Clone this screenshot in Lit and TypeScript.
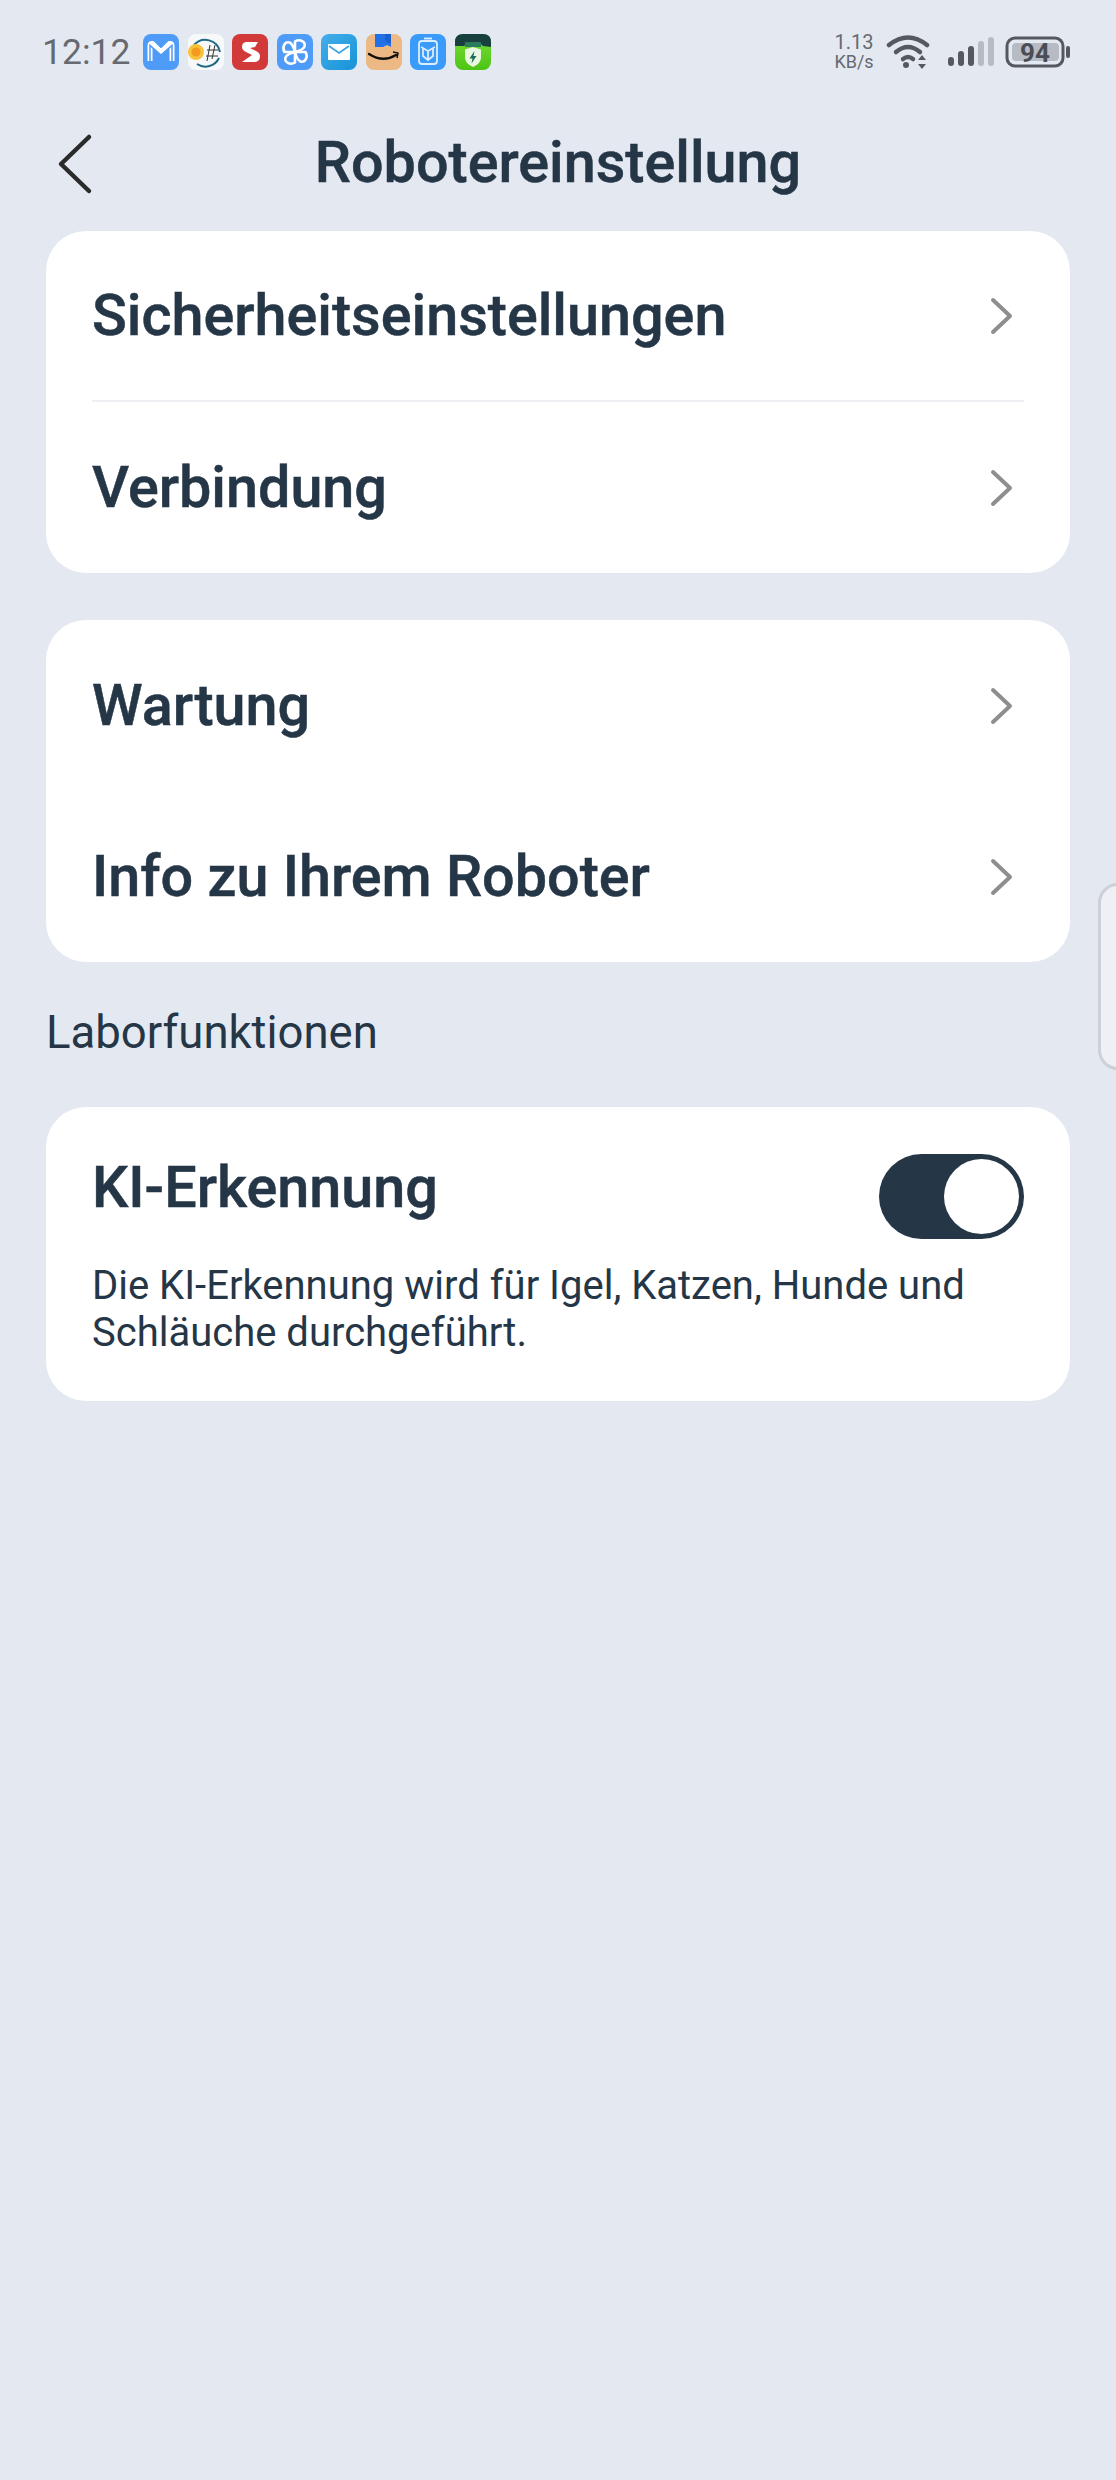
import { LitElement, css, html, svg } from 'lit';
import { customElement } from 'lit/decorators.js';

const fanBlade = 'M18 18V7.500C23 4.500 29 8 27.500 12.500 26 16 22 17 18 18Z';

const appIcons = [
  svg`<rect width="36" height="36" rx="8" fill="#4f9bf8"/><path d="M7 27V11.500Q7 9 9.500 9.500L18 18l8.500-8.500Q29 9 29 11.500V27" fill="none" stroke="#fff" stroke-width="5" stroke-linejoin="round"/><path d="M7 27V11.500L18 21 29 11.500V27" fill="none" stroke="#4f9bf8" stroke-width="1.500"/>`,
  svg`<rect width="36" height="36" rx="8" fill="#f7f8fa"/><path d="M6 11A15 15 0 0 1 32 18M31 24A15 15 0 0 1 9 30" fill="none" stroke="#1d6a84" stroke-width="2"/><circle cx="8" cy="18" r="8" fill="#f8c33a"/><circle cx="8" cy="18" r="4.500" fill="#f39a1e"/><path d="M18 22h12M19 16h11M22 11l-3 16M27 11l-3 14" stroke="#333" stroke-width="1" fill="none"/>`,
  svg`<rect width="36" height="36" rx="8" fill="#d13a38"/><path d="M26 8H15q-5 0-5 5 0 3 4 5l6 3-10 7h12q6 0 6-6 0-3-4-5l-6-3 5-1z" fill="#fff"/>`,
  svg`<rect width="36" height="36" rx="8" fill="#4f9bf8"/><g fill="none" stroke="#fff" stroke-width="2.600" stroke-linejoin="round">${[0, 90, 180, 270].map(
    (a) => svg`<path d=${fanBlade} transform="rotate(${a} 18 18)"/>`,
  )}</g>`,
  svg`<defs><linearGradient id="ml" x1="0" y1="0" x2="1" y2="1"><stop offset="0" stop-color="#45aeea"/><stop offset="1" stop-color="#1593d8"/></linearGradient></defs><rect width="36" height="36" rx="8" fill="url(#ml)"/><rect x="7" y="10" width="22" height="16" rx="1" fill="#fff"/><path d="M8 12l10 7 10-7" fill="none" stroke="#3aa6e3" stroke-width="1.800"/>`,
  svg`<rect width="36" height="36" rx="8" fill="#ecb984"/><path d="M9 0h16v13l-4-2-4 2H9z" fill="#2070e8"/><path d="M19 0h6v9h-3l-3-3z" fill="#1a5fd0"/><path d="M3 20q14 9 27 1" fill="none" stroke="#111" stroke-width="2.400" stroke-linecap="round"/><path d="M27 18l5 1-1 5" fill="none" stroke="#111" stroke-width="1.500"/>`,
  svg`<rect width="36" height="36" rx="8" fill="#3a9bfb"/><g fill="none" stroke="#dcedff" stroke-width="1.800"><rect x="9" y="7" width="18" height="23" rx="3"/><path d="M14 4.500h8"/><path d="M11 13l7 4 7-4M13 15v7l5 4 5-4v-7M18 17v8"/></g>`,
  svg`<defs><linearGradient id="gr" x1="0" y1="0" x2="0" y2="1"><stop offset="0" stop-color="#7be03a"/><stop offset="1" stop-color="#4cc414"/></linearGradient></defs><rect width="36" height="36" rx="8" fill="url(#gr)"/><path d="M0 12V8q0-8 8-8h20q8 0 8 8v5l-8-1-3-3H12l-3 3z" fill="#17403f"/><path d="M10 8h16v5H10z" fill="#2a7a5c"/><path d="M18 13l8 2.500v8q0 6-8 9.500-8-3.500-8-9.500v-8z" fill="#e8f6e2"/><path d="M19.500 17l-5 7.500h3l-1 5 5-7.500h-3z" fill="#1d6b52"/>`,
];

@customElement('app-root')
export class AppRoot extends LitElement {
  static styles = css`
    :host {
      display: block;
      position: relative;
      width: 1116px;
      height: 2480px;
      overflow: hidden;
      background: #e4e9f1;
      color: #253647;
      font-family: Roboto, 'Noto Sans', sans-serif;
    }

    .status {
      height: 36px;
      padding: 34px 45px 0 42px;
      display: flex;
      align-items: center;
    }

    .status__time {
      font-size: 35.500px;
      line-height: 36px;
      color: #666a70;
      width: 101px;
    }

    .status__apps {
      display: flex;
      gap: 8.500px;
    }

    .status__apps svg {
      width: 36px;
      height: 36px;
      display: block;
    }

    .status__right {
      margin-left: auto;
      display: flex;
      align-items: center;
    }

    .speed {
      width: 40px;
      text-align: center;
      color: #666a70;
      font-size: 20px;
      line-height: 19px;
      margin-right: 12px;
    }

    .speed small {
      display: block;
      font-size: 18px;
    }

    .header {
      height: 94px;
      margin-top: 46px;
      display: flex;
      align-items: center;
      justify-content: center;
      position: relative;
    }

    .header__back {
      position: absolute;
      left: 56px;
      top: 17px;
    }

    .header__title {
      font-size: 57.500px;
      font-weight: 500;
      -webkit-text-stroke: 0.500px #253647;
      margin: 0;
      line-height: 64px;
    }

    .content {
      padding: 0 46px;
      margin-top: 21px;
      display: flex;
      flex-direction: column;
    }

    .card {
      background: #fff;
      border-radius: 40px;
      margin-bottom: 47px;
    }

    .row {
      height: 171px;
      box-sizing: border-box;
      display: flex;
      align-items: center;
      justify-content: space-between;
      margin: 0 46px;
      font-size: 57.500px;
      font-weight: 500;
      -webkit-text-stroke: 0.500px #253647;
    }

    .row--line {
      border-bottom: 2px solid #eeeff2;
    }

    .row svg {
      margin-right: 9px;
    }

    .label {
      font-size: 45.500px;
      line-height: 54px;
      margin: -3px 0 47px;
    }

    .ai {
      height: 294px;
      box-sizing: border-box;
      padding: 47px 46px 0;
    }

    .ai__head {
      display: flex;
      align-items: flex-start;
      justify-content: space-between;
      font-size: 57.500px;
      font-weight: 500;
      -webkit-text-stroke: 0.500px #253647;
      height: 85px;
      line-height: 68px;
    }

    .ai__text {
      font-size: 40px;
      line-height: 47px;
      margin: 23px 0 0;
    }

    .toggle {
      width: 145px;
      height: 85px;
      border-radius: 43px;
      background: #253647;
      display: flex;
      align-items: center;
      justify-content: flex-end;
      padding-right: 5px;
      box-sizing: border-box;
    }

    .toggle__knob {
      width: 75px;
      height: 75px;
      border-radius: 50%;
      background: #fff;
    }

    .side-tab {
      position: absolute;
      left: 1098px;
      top: 883px;
      width: 40px;
      height: 187px;
      box-sizing: border-box;
      border: 3px solid #ccd0d8;
      border-radius: 24px;
      background: #eef0f6;
    }
  `;

  #chevron() {
    return html`<svg width="28" height="42" viewBox="0 0 28 42">
      <path d="M6 5l17 16L6 37" fill="none" stroke="#8e8e8e" stroke-width="4" stroke-linecap="round" stroke-linejoin="round" />
    </svg>`;
  }

  #row(label: string, line = false) {
    return html`<div class="row ${line ? 'row--line' : ''}">
      <span>${label}</span>${this.#chevron()}
    </div>`;
  }

  render() {
    return html`
      <div class="status">
        <span class="status__time">12:12</span>
        <div class="status__apps">
          ${appIcons.map((icon) => html`<svg viewBox="0 0 36 36">${icon}</svg>`)}
        </div>
        <div class="status__right">
          <div class="speed">1.13<small>KB/s</small></div>
          <svg width="46" height="36" viewBox="0 0 46 36" fill="none" stroke="#55595f" stroke-width="4.500" stroke-linecap="round">
            <path d="M3 11Q22-4 41 11" />
            <path d="M10 18Q22 8 34 18" />
            <path d="M17 25Q22 21 27 25" />
            <circle cx="20" cy="31" r="3" fill="#55595f" stroke="none" />
            <path d="M36 21l-4 5h8zM36 35l-4-5h8z" fill="#55595f" stroke="none" />
          </svg>
          <svg width="48" height="32" viewBox="0 0 48 32" style="margin-left:15px">
            <rect x="1" y="21" width="6" height="9" rx="3" fill="#55595f" />
            <rect x="11" y="15" width="6" height="15" rx="3" fill="#55595f" />
            <rect x="21" y="10" width="6" height="20" rx="3" fill="#55595f" />
            <rect x="31" y="5" width="6" height="25" rx="3" fill="#b7bbc3" />
            <rect x="41" y="1" width="6" height="29" rx="3" fill="#b7bbc3" />
          </svg>
          <svg width="66" height="32" viewBox="0 0 66 32" style="margin-left:10px">
            <rect x="2" y="2" width="56" height="28" rx="8" fill="none" stroke="#55595f" stroke-width="3" />
            <rect x="7" y="7" width="47" height="18" rx="4" fill="#b7bbc3" />
            <rect x="61" y="10" width="4" height="12" rx="2" fill="#55595f" />
            <text x="30" y="26" text-anchor="middle" font-size="26" font-weight="700" fill="#4a4e54" font-family="Roboto">94</text>
          </svg>
        </div>
      </div>

      <div class="header">
        <svg class="header__back" width="40" height="64" viewBox="0 0 40 64">
          <path d="M33 4L5 31l28 27" fill="none" stroke="#2b2b2b" stroke-width="4.500" stroke-linecap="round" stroke-linejoin="round" />
        </svg>
        <h1 class="header__title">Robotereinstellung</h1>
      </div>

      <div class="content">
        <div class="card">
          ${this.#row('Sicherheitseinstellungen', true)} ${this.#row('Verbindung')}
        </div>
        <div class="card">
          ${this.#row('Wartung')} ${this.#row('Info zu Ihrem Roboter')}
        </div>
        <div class="label">Laborfunktionen</div>
        <div class="card ai">
          <div class="ai__head">
            <span>KI-Erkennung</span>
            <div class="toggle"><div class="toggle__knob"></div></div>
          </div>
          <p class="ai__text">Die KI-Erkennung wird für Igel, Katzen, Hunde und Schläuche durchgeführt.</p>
        </div>
      </div>

      <div class="side-tab"></div>
    `;
  }
}
